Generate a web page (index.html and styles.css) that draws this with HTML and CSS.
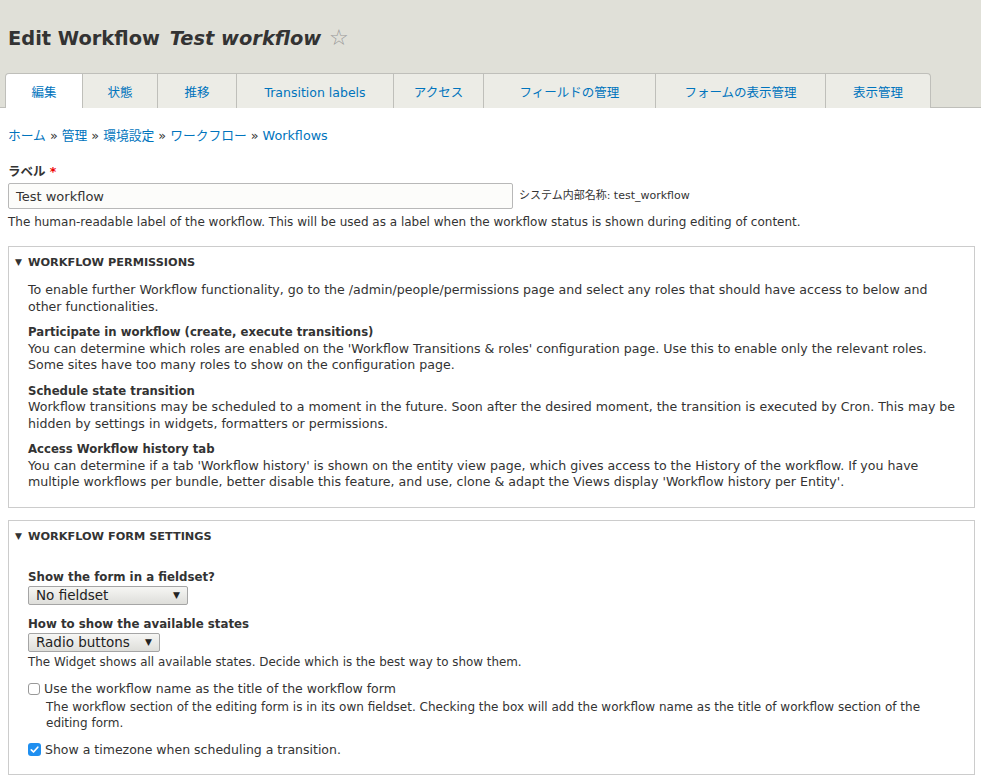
FILE: index.html
```html
<!DOCTYPE html>
<html lang="ja">
  <head>
    <meta charset="UTF-8" />
    <title>Edit Workflow Test workflow</title>
    <link rel="stylesheet" href="styles.css">
  </head>
  <body>
    <header class="page-header">
      <h1 class="page-title">Edit Workflow <em>Test workflow</em> <span class="star">☆</span></h1>
      <ul class="tabs">
        <li class="tab active"><a href="#">編集</a></li>
        <li class="tab" style="width: 75px"><a href="#">状態</a></li>
        <li class="tab" style="width: 79px"><a href="#">推移</a></li>
        <li class="tab" style="width: 157px"><a href="#">Transition labels</a></li>
        <li class="tab" style="width: 90px"><a href="#">アクセス</a></li>
        <li class="tab" style="width: 172px"><a href="#">フィールドの管理</a></li>
        <li class="tab" style="width: 170px"><a href="#">フォームの表示管理</a></li>
        <li class="tab last" style="width: 105px"><a href="#">表示管理</a></li>
      </ul>
    </header>

    <div class="content">
      <nav class="breadcrumb">
        <a href="#">ホーム</a> » <a href="#">管理</a> » <a href="#">環境設定</a> » <a href="#">ワークフロー</a> » <a href="#">Workflows</a>
      </nav>

      <div class="form-item">
        <label class="form-label">ラベル <span class="required">*</span></label>
        <div class="label-row">
          <div class="text-input">Test workflow</div>
          <span class="machine-name">システム内部名称: test_workflow</span>
        </div>
        <div class="description">The human-readable label of the workflow. This will be used as a label when the workflow status is shown during editing of content.</div>
      </div>

      <!-- 権限 -->
      <fieldset class="details">
        <div class="summary"><span class="arrow">▼</span>WORKFLOW PERMISSIONS</div>
        <div class="details-body">
          <p>To enable further Workflow functionality, go to the /admin/people/permissions page and select any roles that should have access to below and other functionalities.</p>
          <p><strong>Participate in workflow (create, execute transitions)</strong><br>You can determine which roles are enabled on the 'Workflow Transitions &amp; roles' configuration page. Use this to enable only the relevant roles. Some sites have too many roles to show on the configuration page.</p>
          <p><strong>Schedule state transition</strong><br>Workflow transitions may be scheduled to a moment in the future. Soon after the desired moment, the transition is executed by Cron. This may be hidden by settings in widgets, formatters or permissions.</p>
          <p><strong>Access Workflow history tab</strong><br>You can determine if a tab 'Workflow history' is shown on the entity view page, which gives access to the History of the workflow. If you have multiple workflows per bundle, better disable this feature, and use, clone &amp; adapt the Views display 'Workflow history per Entity'.</p>
        </div>
      </fieldset>

      <!-- フォーム設定 -->
      <fieldset class="details">
        <div class="summary"><span class="arrow">▼</span>WORKFLOW FORM SETTINGS</div>
        <div class="details-body form-settings">
          <div class="field">
            <div class="field-label">Show the form in a fieldset?</div>
            <div class="select" style="width: 160px">No fieldset<span class="caret">▼</span></div>
          </div>
          <div class="field">
            <div class="field-label">How to show the available states</div>
            <div class="select" style="width: 132px">Radio buttons<span class="caret">▼</span></div>
            <div class="field-desc">The Widget shows all available states. Decide which is the best way to show them.</div>
          </div>
          <div class="field checkbox-field">
            <div class="checkbox-row">
              <span class="checkbox"></span>
              <span>Use the workflow name as the title of the workflow form</span>
            </div>
            <div class="checkbox-desc">The workflow section of the editing form is in its own fieldset. Checking the box will add the workflow name as the title of workflow section of the editing form.</div>
          </div>
          <div class="field checkbox-field last-field">
            <div class="checkbox-row">
              <span class="checkbox checked">
                <svg width="13" height="13" viewBox="0 0 13 13"><path d="M3.3 6.8 L5.5 9 L9.8 4.2" fill="none" stroke="#fff" stroke-width="1.7" stroke-linecap="round" stroke-linejoin="round"/></svg>
              </span>
              <span>Show a timezone when scheduling a transition.</span>
            </div>
          </div>
        </div>
      </fieldset>
    </div>
  </body>
</html>
```

FILE: styles.css
```css
body {
  margin: 0;
  font-family: "DejaVu Sans", "Noto Sans CJK JP", sans-serif;
  font-size: 12px;
  line-height: 16px;
  color: #333;
  background: #fff;
}

a {
  color: #0074bd;
  text-decoration: none;
}

.page-header {
  background-color: #e0e0d8;
  border-bottom: 1px solid #bfbfba;
  padding: 24px 0 0 5px;
}

.page-title {
  margin: 0 0 0 3px;
  font-size: 19.4px;
  line-height: 28px;
  font-weight: bold;
  color: #333;
}

.page-title em {
  font-style: italic;
  margin-left: 3px;
}

.star {
  font-weight: normal;
  font-size: 22px;
  color: #999;
  margin-left: 1px;
}

.tabs {
  display: flex;
  list-style: none;
  margin: 20px 0 0;
  padding: 0;
  height: 34px;
}

.tab {
  width: 78px;
  box-sizing: border-box;
  background-color: #ececE6;
  border: 1px solid #bfbfba;
  border-left: none;
  border-bottom: none;
  display: flex;
  align-items: center;
  justify-content: center;
  margin-bottom: -1px;
}

.tab a {
  font-size: 12.5px;
  padding-top: 3px;
}

.tab.active {
  background-color: #fff;
  border-left: 1px solid #bfbfba;
  border-top-left-radius: 4px;
  height: 35px;
}

.tab.last {
  border-top-right-radius: 4px;
}

.content {
  padding: 0 6px 0 8px;
}

.breadcrumb {
  margin-top: 20px;
  font-size: 12.75px;
  color: #333;
}

.form-item {
  margin-top: 20px;
}

.form-label {
  display: block;
  font-weight: bold;
  font-size: 12.5px;
}

.required {
  color: #e00;
}

.label-row {
  display: flex;
  align-items: center;
  margin-top: 3px;
}

.text-input {
  width: 505px;
  height: 26px;
  box-sizing: border-box;
  border: 1px solid #b8b8b8;
  border-radius: 2px;
  background-color: #fcfcfa;
  padding: 5px 7px;
  font-size: 13px;
  line-height: 15px;
}

.machine-name {
  margin-left: 6px;
  font-size: 11px;
}

.description {
  margin-top: 5px;
  font-size: 12px;
}

.details {
  margin: 16px 0 0;
  padding: 0;
  border: 1px solid #ccc;
}

.details + .details {
  margin-top: 12px;
}

.summary {
  padding: 7px 6px 8px;
  font-weight: bold;
  font-size: 11.3px;
}

.arrow {
  font-size: 9px;
  margin-right: 6px;
  vertical-align: 1px;
}

.details-body {
  padding: 3px 15px 16px 19px;
  font-size: 12.6px;
  line-height: 16.5px;
}

.details-body p {
  margin: 0 0 9px;
}

.details-body p:last-child {
  margin-bottom: 0;
}

.details-body strong {
  font-size: 11.7px;
}

.form-settings {
  padding-top: 16px;
  padding-bottom: 16px;
  font-size: 12px;
  line-height: 16px;
}

.field {
  margin-bottom: 11px;
}

.field.last-field {
  margin-bottom: 0;
}

.field-label {
  font-weight: bold;
  font-size: 11.8px;
  margin-bottom: 1px;
}

.select {
  display: flex;
  align-items: center;
  justify-content: space-between;
  box-sizing: border-box;
  height: 19px;
  padding: 0 7px;
  border: 1px solid #a5a5a5;
  border-radius: 2px;
  background: linear-gradient(#f6f6f4, #dedeDa);
  font-size: 13.5px;
  color: #222;
}

.caret {
  font-size: 9px;
}

.field-desc {
  margin-top: 2px;
  font-size: 11.9px;
}

.checkbox-row {
  display: flex;
  align-items: center;
  font-size: 12.5px;
}

.checkbox {
  width: 12px;
  height: 12px;
  box-sizing: border-box;
  border: 1px solid #999;
  border-radius: 3px;
  background: #fff;
  margin-right: 4px;
  display: flex;
  align-items: center;
  justify-content: center;
}

.checkbox.checked {
  width: 13px;
  height: 13px;
  border: none;
  background: #1f8ff0;
}

.checkbox-desc {
  margin: 2px 0 0 18px;
  font-size: 12px;
}
```
